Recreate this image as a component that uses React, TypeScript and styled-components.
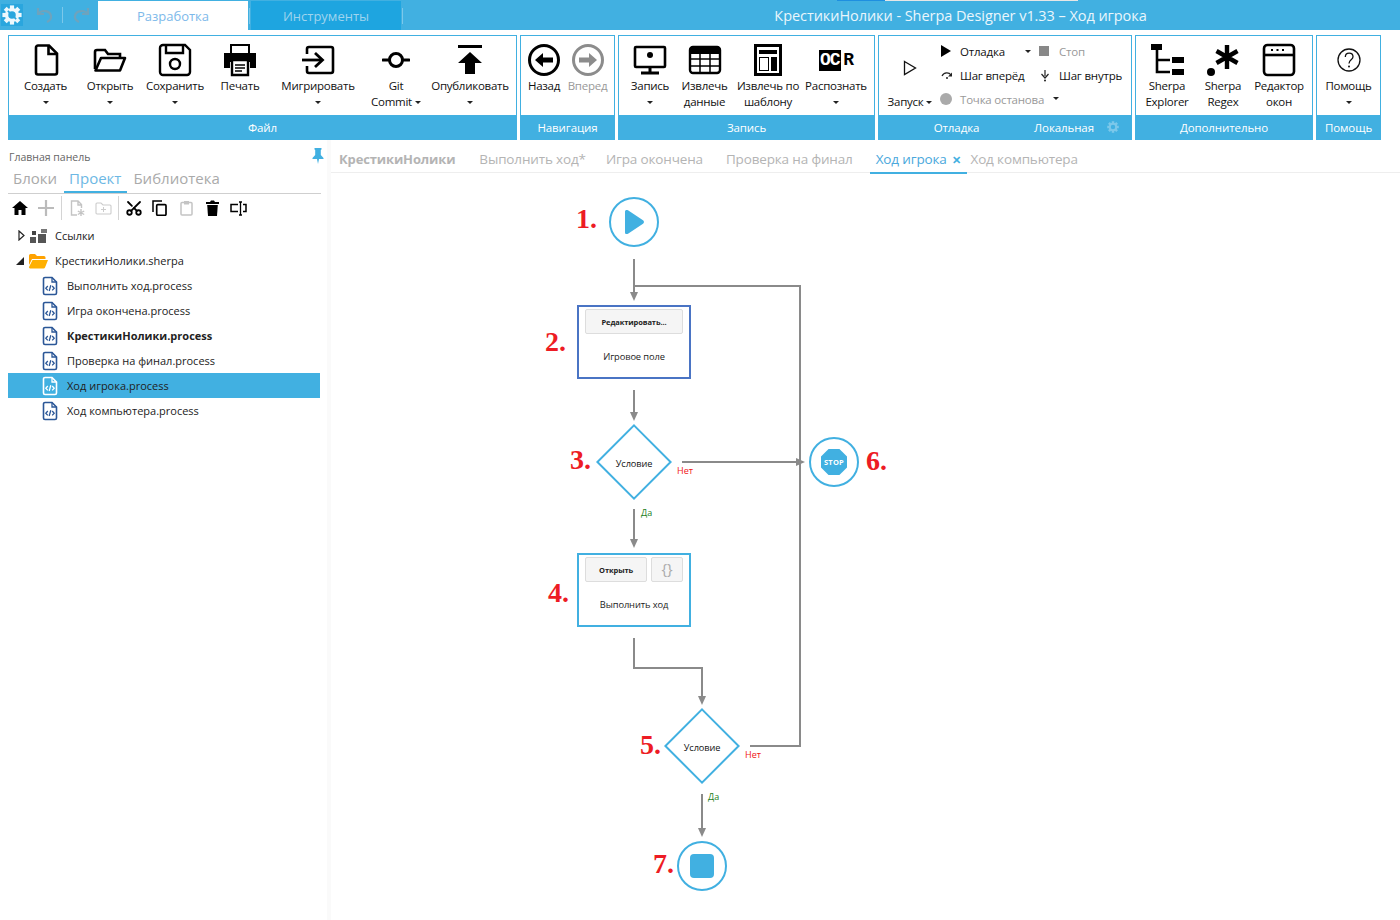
import styled, { createGlobalStyle } from 'styled-components';
import { Scissors } from 'lucide-react';
import type { ReactNode } from 'react';

const BLUE = '#41b0e1';
const GREY = '#8a8a8a';
const ORIGIN_X = 331;
const ORIGIN_Y = 173;

const GlobalStyle = createGlobalStyle`
    html, body {
        margin: 0;
        padding: 0;
        height: 100%;
        overflow: hidden;
        background: #fff;
        font-family: "Open Sans", "Noto Sans", sans-serif;
    }
`

const Page = styled.div`
    width: 1400px;
    height: 920px;
    display: flex;
    flex-direction: column;
    position: relative;
    overflow: hidden;
`

/* title bar */
const TitleBar = styled.header`
    height: 30px;
    background: ${BLUE};
    display: flex;
    align-items: flex-end;
    position: relative;
    flex: none;
`

const QuickBar = styled.div`
    width: 98px;
    height: 30px;
    display: flex;
    align-items: center;
    padding-left: 1px;
    box-sizing: border-box;
`

const GearBox = styled.div`
    width: 22px;
    height: 22px;
    background: #2aa6de;
    display: flex;
    align-items: center;
    justify-content: center;
    margin-right: 13px;
`

const QuickIcon = styled.div`
    width: 18px;
    height: 18px;
    margin-right: 8px;
    display: flex;
    align-items: center;
`

const QuickDivider = styled.div`
    width: 1px;
    height: 16px;
    background: #7cc8ea;
    margin-right: 9px;
`

const TopTab = styled.div<{ $active?: boolean }>`
    width: 150px;
    height: 29px;
    display: flex;
    align-items: center;
    justify-content: center;
    font-size: 13px;
    background: ${p => (p.$active ? '#fff' : '#1ea5e0')};
    color: ${p => (p.$active ? '#7db9ea' : '#9fd4ee')};
`

const TopTabDivider = styled.div`
    width: 1px;
    height: 16px;
    background: #7cc8ea;
    margin: 0 1px 6px 1px;
`

const WindowTitle = styled.div`
    position: absolute;
    left: 521px;
    right: 0;
    top: 0;
    height: 30px;
    line-height: 31px;
    text-align: center;
    color: #eaf6fc;
    font-size: 14.5px;
    letter-spacing: -0.06px;
`

const TopStrip = styled.div`
    position: absolute;
    left: 837px;
    top: 0;
    width: 241px;
    height: 1px;
    background: linear-gradient(90deg, #1e8fe0 0 48px, #e6e6e6 48px);
`

/* ribbon */
const Ribbon = styled.div`
    display: flex;
    gap: 3px;
    padding: 5px 0 0 8px;
    flex: none;
`

const Group = styled.section<{ $width: number }>`
    width: ${p => p.$width}px;
    height: 105px;
    box-sizing: border-box;
    border: 1px solid ${BLUE};
    display: flex;
    flex-direction: column;
`

const GroupBody = styled.div`
    height: 79px;
    display: flex;
    justify-content: flex-start;
    flex: none;
`

const GroupFooter = styled.div`
    flex: 1;
    background: ${BLUE};
    color: #fff;
    font-size: 11.5px;
    font-weight: 500;
    letter-spacing: -0.1px;
    display: flex;
    align-items: center;
    justify-content: center;
`

const DebugFooter = styled(GroupFooter)`
    justify-content: flex-start;
`

const DebugFooterMain = styled.span`
    width: 155px;
    text-align: center;
`

const DebugFooterSide = styled.span`
    width: 60px;
    text-align: center;
    margin-right: 13px;
`

const RibbonButton = styled.div<{ $width: number; $disabled?: boolean }>`
    width: ${p => p.$width}px;
    flex: none;
    display: flex;
    flex-direction: column;
    align-items: center;
    color: ${p => (p.$disabled ? '#999' : '#111')};
`

const IconSlot = styled.div<{ $height?: number }>`
    height: ${p => p.$height ?? 42}px;
    width: 100%;
    display: flex;
    align-items: center;
    justify-content: center;
    padding-top: 6px;
    box-sizing: border-box;
`

const ButtonLabel = styled.div`
    font-size: 11.5px;
    line-height: 16px;
    letter-spacing: -0.25px;
    text-align: center;
    white-space: nowrap;
`

const Caret = styled.i<{ $inline?: boolean; $raised?: boolean }>`
    display: inline-block;
    width: 0;
    height: 0;
    border-left: 3px solid transparent;
    border-right: 3px solid transparent;
    border-top: 3px solid #222;
    vertical-align: middle;
    margin-left: ${p => (p.$raised ? '9px' : p.$inline ? '3px' : '0')};
    margin-bottom: ${p => (p.$raised ? '4px' : '0')};
`

const CaretLine = styled.div`
    height: 16px;
    display: flex;
    align-items: center;
    justify-content: center;
`

const OcrMark = styled.div`
    display: flex;
    align-items: center;
    height: 21px;
    font-family: "Liberation Mono", monospace;
    font-weight: 700;
    font-size: 18px;
    letter-spacing: -1.2px;
`

const OcrDark = styled.span`
    background: #000;
    color: #fff;
    height: 21px;
    line-height: 21px;
    padding: 0 2px 0 1px;
`

const OcrPlain = styled.span`
    color: #000;
    margin-left: 2px;
`

const DebugGrid = styled.div`
    display: grid;
    grid-template-columns: 20px 65px 14px 20px 62px;
    grid-auto-rows: 24px;
    align-items: center;
    padding-top: 3px;
    margin-left: -1px;
    font-size: 11.5px;
    letter-spacing: -0.2px;
    color: #111;
`

const DebugIcon = styled.div`
    display: flex;
    align-items: center;
    justify-content: flex-start;
`

const DebugText = styled.div<{ $disabled?: boolean; $span?: number }>`
    color: ${p => (p.$disabled ? '#999' : '#111')};
    white-space: nowrap;
    grid-column: ${p => (p.$span ? `span ${p.$span}` : 'auto')};
`

const Square = styled.div`
    width: 10px;
    height: 10px;
    background: #888;
`

const Dot = styled.div`
    width: 12px;
    height: 12px;
    border-radius: 50%;
    background: #aaa;
`

/* main */
const Main = styled.div`
    flex: 1;
    display: flex;
    min-height: 0;
`

const Sidebar = styled.aside`
    width: 313px;
    margin-left: 8px;
    padding-top: 9px;
    flex: none;
    position: relative;
`

const PanelTitle = styled.div`
    font-size: 10.5px;
    line-height: 16px;
    color: #666;
    padding-left: 1px;
`

const PinIcon = styled.div`
    position: absolute;
    right: -3px;
    top: 7px;
`

const SideTabs = styled.div`
    display: flex;
    gap: 1px;
    height: 25px;
    margin-top: 3px;
    border-bottom: 1px solid #cfcfcf;
    box-sizing: content-box;
`

const SideTab = styled.div<{ $active?: boolean }>`
    font-size: 15px;
    line-height: 21px;
    padding: 0 6px 0 5px;
    height: 25px;
    color: ${p => (p.$active ? '#6db8e4' : '#aaa')};
    border-bottom: ${p => (p.$active ? `2px solid ${BLUE}` : 'none')};
    box-sizing: border-box;
`

const Toolbar = styled.div`
    display: flex;
    align-items: center;
    height: 28px;
    padding-left: 4px;
`

const ToolIcon = styled.div<{ $width?: number }>`
    width: ${p => p.$width ?? 27}px;
    display: flex;
    align-items: center;
    justify-content: flex-start;
    flex: none;
`

const ToolDivider = styled.div<{ $gap?: number }>`
    width: 1px;
    height: 24px;
    background: #d4d4d4;
    margin-right: ${p => p.$gap ?? 8}px;
    flex: none;
`

const Tree = styled.div`
    margin-top: 1px;
    width: 312px;
`

const TreeRow = styled.div<{ $selected?: boolean; $indent: number; $bold?: boolean }>`
    height: 25px;
    display: flex;
    align-items: center;
    padding-left: ${p => p.$indent}px;
    background: ${p => (p.$selected ? BLUE : 'transparent')};
    font-size: 11px;
    color: #222;
    font-weight: ${p => (p.$bold ? 700 : 400)};
`

const Expander = styled.div<{ $width: number }>`
    width: ${p => p.$width}px;
    flex: none;
    display: flex;
    justify-content: flex-start;
`

const TreeLabel = styled.span`
    white-space: nowrap;
`

const FileSlot = styled.div`
    width: 25px;
    flex: none;
    display: flex;
`

const RootSlot = styled.div<{ $width: number }>`
    width: ${p => p.$width}px;
    flex: none;
    display: flex;
`

const Gutter = styled.div`
    width: 10px;
    box-sizing: border-box;
    border-right: 4px solid #fafafa;
    flex: none;
`

const Editor = styled.main`
    flex: 1;
    display: flex;
    flex-direction: column;
    min-width: 0;
    padding-top: 9px;
`

const DocTabs = styled.div`
    height: 23px;
    display: flex;
    border-bottom: 1px solid #eee;
    padding-left: 2px;
    flex: none;
    box-sizing: content-box;
`

const DocTab = styled.div<{ $active?: boolean; $bold?: boolean; $left: number }>`
    margin-left: ${p => p.$left}px;
    height: 20px;
    padding: 0 6px 3px;
    display: flex;
    align-items: center;
    gap: 5px;
    font-size: ${p => (p.$bold ? '13px' : '13.5px')};
    letter-spacing: -0.15px;
    white-space: nowrap;
    font-weight: ${p => (p.$bold ? 700 : 400)};
    color: ${p => (p.$active ? '#4aa8dc' : '#b4b4b4')};
    border-bottom: ${p => (p.$active ? `2px solid ${BLUE}` : 'none')};
    box-sizing: content-box;
`

const CloseMark = styled.span`
    color: ${BLUE};
    font-size: 11px;
    font-weight: 700;
`

const Canvas = styled.div`
    flex: 1;
    position: relative;
`

const Wires = styled.svg`
    position: absolute;
    left: 0;
    top: 0;
`

const Circle = styled.div<{ $x: number; $y: number }>`
    position: absolute;
    left: ${p => p.$x - ORIGIN_X - 25}px;
    top: ${p => p.$y - ORIGIN_Y - 25}px;
    width: 50px;
    height: 50px;
    box-sizing: border-box;
    border: 2px solid ${BLUE};
    border-radius: 50%;
    display: flex;
    align-items: center;
    justify-content: center;
    background: #fff;
`

const EndSquare = styled.div`
    width: 24px;
    height: 24px;
    border-radius: 4px;
    background: ${BLUE};
`

const StopSign = styled.div`
    width: 26px;
    height: 26px;
    background: ${BLUE};
    clip-path: polygon(29% 0, 71% 0, 100% 29%, 100% 71%, 71% 100%, 29% 100%, 0 71%, 0 29%);
    display: flex;
    align-items: center;
    justify-content: center;
    color: #fff;
    font-size: 7.5px;
    font-weight: 700;
    letter-spacing: 0.2px;
`

const Block = styled.div<{ $x: number; $y: number; $color: string }>`
    position: absolute;
    left: ${p => p.$x - ORIGIN_X}px;
    top: ${p => p.$y - ORIGIN_Y}px;
    width: 114px;
    height: 74px;
    box-sizing: border-box;
    border: 2px solid ${p => p.$color};
    background: #fff;
    padding: 2px 6px 0;
    display: flex;
    flex-direction: column;
`

const BlockButtons = styled.div`
    display: flex;
    gap: 4px;
`

const BlockButton = styled.div<{ $width: number }>`
    width: ${p => p.$width}px;
    height: 25px;
    box-sizing: border-box;
    background: #f5f5f5;
    border: 1px solid #ddd;
    border-radius: 2px;
    display: flex;
    align-items: center;
    justify-content: center;
    font-size: 7.5px;
    font-weight: 700;
    color: #222;
    letter-spacing: -0.1px;
`

const BraceButton = styled(BlockButton)`
    font-size: 15px;
    font-weight: 400;
    color: #aaa;
    padding-bottom: 3px;
`

const BlockCaption = styled.div`
    flex: 1;
    display: flex;
    align-items: center;
    justify-content: center;
    font-size: 9.3px;
    letter-spacing: -0.1px;
    color: #222;
    padding-top: 2px;
`

const Diamond = styled.div<{ $x: number; $y: number }>`
    position: absolute;
    left: ${p => p.$x - ORIGIN_X - 38}px;
    top: ${p => p.$y - ORIGIN_Y - 38}px;
    width: 76px;
    height: 76px;
    display: flex;
    align-items: center;
    justify-content: center;
    font-size: 9.2px;
    letter-spacing: -0.1px;
    color: #111;
    padding-top: 2px;
    box-sizing: border-box;
`

const DiamondShape = styled.svg`
    position: absolute;
    left: 0;
    top: 0;
`

const DiamondLabel = styled.span`
    position: relative;
`

const Branch = styled.span<{ $x: number; $y: number; $yes?: boolean }>`
    position: absolute;
    left: ${p => p.$x - ORIGIN_X}px;
    top: ${p => p.$y - ORIGIN_Y}px;
    font-size: 9px;
    line-height: 12px;
    color: ${p => (p.$yes ? '#1c7f1c' : '#f01414')};
`

const StepNumber = styled.span<{ $x: number; $y: number }>`
    position: absolute;
    left: ${p => p.$x - ORIGIN_X}px;
    top: ${p => p.$y - ORIGIN_Y - 16}px;
    font-family: "Liberation Serif", serif;
    font-weight: 700;
    font-size: 28px;
    line-height: 32px;
    color: #ed1c24;
`

const steps = [
    { n: '1.', x: 576, y: 219 },
    { n: '2.', x: 545, y: 342 },
    { n: '3.', x: 570, y: 460 },
    { n: '4.', x: 548, y: 593 },
    { n: '5.', x: 640, y: 745 },
    { n: '6.', x: 866, y: 461 },
    { n: '7.', x: 653, y: 864 },
];

const wirePaths = [
    'M634 259V293',
    'M634 286H800V746H750',
    'M634 390V412',
    'M682 462H798',
    'M634 509V540',
    'M634 638V668H702V697',
    'M702 794V829',
];

const arrowHeads = [
    [634, 301, 'down'], [634, 421, 'down'], [805, 462, 'right'],
    [634, 548, 'down'], [702, 705, 'down'], [702, 837, 'down'],
] as const;

const files = [
    { name: 'Выполнить ход.process' },
    { name: 'Игра окончена.process' },
    { name: 'КрестикиНолики.process', bold: true },
    { name: 'Проверка на финал.process' },
    { name: 'Ход игрока.process', selected: true },
    { name: 'Ход компьютера.process' },
];

function Ico(props: { w: number; h: number; children: ReactNode }) {
    return <svg width={props.w} height={props.h} viewBox={`0 0 ${props.w} ${props.h}`} fill="none">{props.children}</svg>;
}

function GearGlyph(props: { size: number; color: string; slash?: string }) {
    const teeth = [0, 45, 90, 135, 180, 225, 270, 315];
    return (
        <svg width={props.size} height={props.size} viewBox="0 0 24 24" fill="none">
            {teeth.map(a => (
                <rect key={a} x="9.5" y="0.5" width="5" height="6" fill={props.color} transform={`rotate(${a} 12 12)`} />
            ))}
            <circle cx="12" cy="12" r="6.5" stroke={props.color} strokeWidth="4" />
            {props.slash && <path d="M7 7L17 17" stroke={props.slash} strokeWidth="2" />}
        </svg>
    );
}

function FileIcon(props: { light?: boolean }) {
    const c = props.light ? '#fff' : '#2b5797';
    return (
        <svg width="16" height="20" viewBox="0 0 16 20" fill="none">
            <path d="M1.5 3A1.5 1.5 0 0 1 3 1.5H10L14.5 6V17A1.5 1.5 0 0 1 13 18.5H3A1.5 1.5 0 0 1 1.5 17Z" stroke={c} strokeWidth="1.6" />
            <path d="M10 1.5V6H14.5" stroke={c} strokeWidth="1.3" />
            <path d="M5.8 10L3.8 12.2L5.8 14.4M10.2 10L12.2 12.2L10.2 14.4M8.8 9.3L7.2 15" stroke={c} strokeWidth="1.3" />
        </svg>
    );
}

function CaretLineEl() {
    return <CaretLine><Caret /></CaretLine>;
}

function FileGroup() {
    return (
        <Group $width={509}>
            <GroupBody>
                <RibbonButton $width={73}>
                    <IconSlot>
                        <Ico w={26} h={34}>
                            <path d="M3 4.5A2 2 0 0 1 5 2.5H16L24 10.5V29.5A2 2 0 0 1 22 31.5H5A2 2 0 0 1 3 29.5Z" stroke="#000" strokeWidth="2.6" />
                            <path d="M15.5 2.5V11H24" stroke="#000" strokeWidth="2.6" />
                        </Ico>
                    </IconSlot>
                    <ButtonLabel>Создать</ButtonLabel>
                    <CaretLineEl />
                </RibbonButton>
                <RibbonButton $width={56}>
                    <IconSlot>
                        <Ico w={34} h={26}>
                            <path d="M2 22V5A2 2 0 0 1 4 3H12L15 7H27V11" stroke="#000" strokeWidth="2.6" />
                            <path d="M2.5 23.5L8 11H32L27 23.5Z" stroke="#000" strokeWidth="2.6" strokeLinejoin="round" />
                        </Ico>
                    </IconSlot>
                    <ButtonLabel>Открыть</ButtonLabel>
                    <CaretLineEl />
                </RibbonButton>
                <RibbonButton $width={74}>
                    <IconSlot>
                        <Ico w={34} h={34}>
                            <path d="M2 5A3 3 0 0 1 5 2H27L32 7V29A3 3 0 0 1 29 32H5A3 3 0 0 1 2 29Z" stroke="#000" strokeWidth="2.4" />
                            <path d="M8 2V10H25V2" stroke="#000" strokeWidth="2.4" />
                            <circle cx="17" cy="21" r="5" stroke="#000" strokeWidth="2.4" />
                        </Ico>
                    </IconSlot>
                    <ButtonLabel>Сохранить</ButtonLabel>
                    <CaretLineEl />
                </RibbonButton>
                <RibbonButton $width={56}>
                    <IconSlot>
                        <Ico w={34} h={34}>
                            <path d="M8 10V2H26V10" stroke="#000" strokeWidth="2" />
                            <path d="M1 10H33V25H27V19H7V25H1Z" fill="#000" />
                            <path d="M9 17H25V32H9Z" fill="#fff" stroke="#000" strokeWidth="2.4" />
                            <path d="M12 22H22M12 25H22M12 28H19" stroke="#000" strokeWidth="1.4" />
                        </Ico>
                    </IconSlot>
                    <ButtonLabel>Печать</ButtonLabel>
                </RibbonButton>
                <RibbonButton $width={100}>
                    <IconSlot>
                        <Ico w={34} h={30}>
                            <path d="M6 9V4A2 2 0 0 1 8 2H30A2 2 0 0 1 32 4V26A2 2 0 0 1 30 28H8A2 2 0 0 1 6 26V21" stroke="#000" strokeWidth="2.6" />
                            <path d="M1 15H20" stroke="#000" strokeWidth="2.8" />
                            <path d="M14 8L21.5 15L14 22" stroke="#000" strokeWidth="2.8" />
                        </Ico>
                    </IconSlot>
                    <ButtonLabel>Мигрировать</ButtonLabel>
                    <CaretLineEl />
                </RibbonButton>
                <RibbonButton $width={56}>
                    <IconSlot>
                        <Ico w={28} h={18}>
                            <path d="M1 9H7M21 9H27" stroke="#000" strokeWidth="3" strokeLinecap="round" />
                            <circle cx="14" cy="9" r="6.5" stroke="#000" strokeWidth="3" />
                        </Ico>
                    </IconSlot>
                    <ButtonLabel>Git<br />Commit<Caret $inline /></ButtonLabel>
                </RibbonButton>
                <RibbonButton $width={92}>
                    <IconSlot>
                        <Ico w={24} h={30}>
                            <path d="M0 1.5H24" stroke="#000" strokeWidth="3" />
                            <path d="M12 7L24 18H17V29H7V18H0Z" fill="#000" />
                        </Ico>
                    </IconSlot>
                    <ButtonLabel>Опубликовать</ButtonLabel>
                    <CaretLineEl />
                </RibbonButton>
            </GroupBody>
            <GroupFooter>Файл</GroupFooter>
        </Group>
    );
}

function NavGroup() {
    return (
        <Group $width={95}>
            <GroupBody>
                <RibbonButton $width={46}>
                    <IconSlot>
                        <Ico w={34} h={34}>
                            <circle cx="17" cy="17" r="14.5" stroke="#000" strokeWidth="3" />
                            <path d="M8 17L16 10V14.5H26V19.5H16V24Z" fill="#000" />
                        </Ico>
                    </IconSlot>
                    <ButtonLabel>Назад</ButtonLabel>
                </RibbonButton>
                <RibbonButton $width={41} $disabled>
                    <IconSlot>
                        <Ico w={34} h={34}>
                            <circle cx="17" cy="17" r="14.5" stroke="#8c8c8c" strokeWidth="3" />
                            <path d="M26 17L18 10V14.5H8V19.5H18V24Z" fill="#8c8c8c" />
                        </Ico>
                    </IconSlot>
                    <ButtonLabel>Вперед</ButtonLabel>
                </RibbonButton>
            </GroupBody>
            <GroupFooter>Навигация</GroupFooter>
        </Group>
    );
}

function RecordGroup() {
    return (
        <Group $width={257}>
            <GroupBody>
                <RibbonButton $width={62}>
                    <IconSlot>
                        <Ico w={34} h={30}>
                            <rect x="2" y="2" width="30" height="20" stroke="#000" strokeWidth="2.6" rx="1" />
                            <circle cx="17" cy="10" r="3" fill="#000" />
                            <path d="M17 22V27M8 28H26" stroke="#000" strokeWidth="3" />
                        </Ico>
                    </IconSlot>
                    <ButtonLabel>Запись</ButtonLabel>
                    <CaretLineEl />
                </RibbonButton>
                <RibbonButton $width={47}>
                    <IconSlot>
                        <Ico w={34} h={30}>
                            <rect x="2" y="2" width="30" height="26" rx="3" stroke="#000" strokeWidth="2.4" />
                            <path d="M2 6H32" stroke="#000" strokeWidth="6" />
                            <path d="M2 14H32M2 21H32M12 8V28M22 8V28" stroke="#000" strokeWidth="1.5" />
                        </Ico>
                    </IconSlot>
                    <ButtonLabel>Извлечь<br />данные</ButtonLabel>
                </RibbonButton>
                <RibbonButton $width={80}>
                    <IconSlot>
                        <Ico w={28} h={32}>
                            <rect x="1.5" y="1.5" width="25" height="29" stroke="#000" strokeWidth="3" />
                            <path d="M5 6H23V10H5Z" fill="#000" />
                            <rect x="5.5" y="13.5" width="9" height="13" stroke="#000" strokeWidth="1" />
                            <path d="M17 13H23V27H17Z" fill="#000" />
                        </Ico>
                    </IconSlot>
                    <ButtonLabel>Извлечь по<br />шаблону</ButtonLabel>
                </RibbonButton>
                <RibbonButton $width={56}>
                    <IconSlot>
                        <OcrMark><OcrDark>OC</OcrDark><OcrPlain>R</OcrPlain></OcrMark>
                    </IconSlot>
                    <ButtonLabel>Распознать</ButtonLabel>
                    <CaretLineEl />
                </RibbonButton>
            </GroupBody>
            <GroupFooter>Запись</GroupFooter>
        </Group>
    );
}

function DebugGroup() {
    return (
        <Group $width={254}>
            <GroupBody>
                <RibbonButton $width={62}>
                    <IconSlot $height={58}>
                        <Ico w={14} h={16}>
                            <path d="M1.5 1.5L12.5 8L1.5 14.5Z" stroke="#111" strokeWidth="1.3" />
                        </Ico>
                    </IconSlot>
                    <ButtonLabel>Запуск<Caret $inline /></ButtonLabel>
                </RibbonButton>
                <DebugGrid>
                    <DebugIcon>
                        <Ico w={12} h={14}><path d="M1 1L11 7L1 13Z" fill="#000" /></Ico>
                    </DebugIcon>
                    <DebugText>Отладка</DebugText>
                    <Caret />
                    <DebugIcon><Square /></DebugIcon>
                    <DebugText $disabled>Стоп</DebugText>
                    <DebugIcon>
                        <Ico w={14} h={10}>
                            <path d="M2 6C4 2 9 2 11 5" stroke="#222" strokeWidth="1.2" />
                            <path d="M12 2.5V6.5H8" fill="#222" />
                            <circle cx="7" cy="8" r="1" fill="#222" />
                        </Ico>
                    </DebugIcon>
                    <DebugText>Шаг вперёд</DebugText>
                    <span />
                    <DebugIcon>
                        <Ico w={12} h={13}>
                            <path d="M6 1V7" stroke="#222" strokeWidth="1.2" />
                            <path d="M2.5 5L6 9L9.5 5" stroke="#222" strokeWidth="1.2" />
                            <circle cx="6" cy="11.5" r="1" fill="#222" />
                        </Ico>
                    </DebugIcon>
                    <DebugText>Шаг внутрь</DebugText>
                    <DebugIcon><Dot /></DebugIcon>
                    <DebugText $disabled $span={2}>Точка останова<Caret $raised /></DebugText>
                </DebugGrid>
            </GroupBody>
            <DebugFooter>
                <DebugFooterMain>Отладка</DebugFooterMain>
                <DebugFooterSide>Локальная</DebugFooterSide>
                <GearGlyph size={12} color="#7cc8ea" />
            </DebugFooter>
        </Group>
    );
}

function ExtraGroup() {
    return (
        <Group $width={178}>
            <GroupBody>
                <RibbonButton $width={62}>
                    <IconSlot>
                        <Ico w={34} h={34}>
                            <path d="M1 1H12V7H1ZM22 14H34V20H22ZM22 26H34V32H22Z" fill="#000" />
                            <path d="M7 7V29H20M7 17H20" stroke="#000" strokeWidth="2.6" />
                        </Ico>
                    </IconSlot>
                    <ButtonLabel>Sherpa<br />Explorer</ButtonLabel>
                </RibbonButton>
                <RibbonButton $width={50}>
                    <IconSlot>
                        <Ico w={34} h={34}>
                            <circle cx="5" cy="29" r="4" fill="#000" />
                            <path d="M21 2V26M10.5 8L31.5 20M31.5 8L10.5 20" stroke="#000" strokeWidth="4.4" />
                        </Ico>
                    </IconSlot>
                    <ButtonLabel>Sherpa<br />Regex</ButtonLabel>
                </RibbonButton>
                <RibbonButton $width={62}>
                    <IconSlot>
                        <Ico w={34} h={34}>
                            <rect x="2" y="2" width="30" height="30" rx="3.5" stroke="#000" strokeWidth="2.6" />
                            <path d="M2 12H32" stroke="#000" strokeWidth="2.6" />
                            <path d="M9 7H11M14.5 7H16.5M20 7H22" stroke="#000" strokeWidth="2" />
                        </Ico>
                    </IconSlot>
                    <ButtonLabel>Редактор<br />окон</ButtonLabel>
                </RibbonButton>
            </GroupBody>
            <GroupFooter>Дополнительно</GroupFooter>
        </Group>
    );
}

function HelpGroup() {
    return (
        <Group $width={65}>
            <GroupBody>
                <RibbonButton $width={63}>
                    <IconSlot>
                        <svg width="24" height="24" viewBox="0 0 24 24" fill="none">
                            <circle cx="12" cy="12" r="11" stroke="#111" strokeWidth="1.3" />
                            <path d="M8.3 9C8.5 3.8 16 4.2 16 8.8C16 11.8 12 12 12 15.5" stroke="#111" strokeWidth="1.3" />
                            <circle cx="12" cy="18.5" r="1" fill="#111" />
                        </svg>
                    </IconSlot>
                    <ButtonLabel>Помощь</ButtonLabel>
                    <CaretLineEl />
                </RibbonButton>
            </GroupBody>
            <GroupFooter>Помощь</GroupFooter>
        </Group>
    );
}

function ProjectPanel() {
    return (
        <Sidebar>
            <PanelTitle>Главная панель</PanelTitle>
            <PinIcon>
                <svg width="12" height="16" viewBox="0 0 12 16" fill={BLUE}>
                    <path d="M2.5 0H9.5V1.5L8.8 2V7L11.5 10V11H0.5V10L3.2 7V2L2.5 1.5Z" />
                    <path d="M5 11H7L6 16Z" />
                </svg>
            </PinIcon>
            <SideTabs>
                <SideTab>Блоки</SideTab>
                <SideTab $active>Проект</SideTab>
                <SideTab>Библиотека</SideTab>
            </SideTabs>
            <Toolbar>
                <ToolIcon $width={26}>
                    <svg width="16" height="14" viewBox="0 0 16 14" fill="#000">
                        <path d="M8 0L16 7H13.5V14H9.5V9H6.5V14H2.5V7H0Z" />
                    </svg>
                </ToolIcon>
                <ToolIcon $width={23}>
                    <svg width="16" height="16" viewBox="0 0 16 16"><path d="M8 0V16M0 8H16" stroke="#bbb" strokeWidth="2.2" /></svg>
                </ToolIcon>
                <ToolDivider />
                <ToolIcon $width={25}>
                    <svg width="15" height="17" viewBox="0 0 15 17" fill="none">
                        <path d="M7 15H1.5V1H8L11.5 4.5V8M8 1V5H11.5" stroke="#c4c4c4" strokeWidth="1.4" />
                        <path d="M11 9V16M7.8 11L14.2 14.5M14.2 11L7.8 14.5" stroke="#c4c4c4" strokeWidth="1.4" />
                    </svg>
                </ToolIcon>
                <ToolIcon $width={23}>
                    <svg width="17" height="14" viewBox="0 0 17 14" fill="none">
                        <path d="M1 3A1 1 0 0 1 2 2H6L8 4H15A1 1 0 0 1 16 5V12A1 1 0 0 1 15 13H2A1 1 0 0 1 1 12Z" stroke="#ccc" strokeWidth="1.1" />
                        <path d="M6 8.5H11M8.5 6V11" stroke="#ccc" strokeWidth="1" />
                    </svg>
                </ToolIcon>
                <ToolDivider $gap={6} />
                <ToolIcon>
                    <Scissors size={18} color="#000" strokeWidth={2.4} style={{ transform: 'rotate(90deg) scaleX(-1)' }} />
                </ToolIcon>
                <ToolIcon $width={28}>
                    <svg width="15" height="16" viewBox="0 0 15 16" fill="none">
                        <path d="M1 12V1H10" stroke="#000" strokeWidth="1.5" />
                        <rect x="4.7" y="4.7" width="9.3" height="10.6" rx="1" stroke="#000" strokeWidth="1.7" />
                    </svg>
                </ToolIcon>
                <ToolIcon $width={26}>
                    <svg width="13" height="16" viewBox="0 0 13 16" fill="none">
                        <rect x="1" y="2.5" width="11" height="12.5" rx="1" stroke="#c4c4c4" strokeWidth="1.5" />
                        <path d="M4 1H9V4.5H4Z" fill="#c4c4c4" />
                    </svg>
                </ToolIcon>
                <ToolIcon $width={24}>
                    <svg width="13" height="16" viewBox="0 0 13 16" fill="#000">
                        <path d="M0 2H4L5 0.5H8L9 2H13V4H0Z" />
                        <path d="M1.2 5H11.8L11 16H2Z" />
                    </svg>
                </ToolIcon>
                <ToolIcon>
                    <svg width="17" height="15" viewBox="0 0 17 15" fill="none">
                        <path d="M8 3.5H1V10.5H8M13 3.5H16V10.5H13" stroke="#000" strokeWidth="1.5" />
                        <path d="M9 1H10.5V14H9M12 1H10.5V14H12" stroke="#000" strokeWidth="1.3" />
                    </svg>
                </ToolIcon>
            </Toolbar>
            <Tree>
                <TreeRow $indent={10}>
                    <Expander $width={12}>
                        <svg width="7" height="11" viewBox="0 0 7 11" fill="none"><path d="M1 1L6 5.5L1 10Z" stroke="#222" strokeWidth="1.2" /></svg>
                    </Expander>
                    <RootSlot $width={25}>
                        <svg width="17" height="14" viewBox="0 0 17 14" fill="#555">
                            <rect x="0" y="8" width="6" height="6" />
                            <rect x="2" y="2" width="4" height="4" fill="#444" />
                            <rect x="8" y="5" width="8" height="9" />
                            <rect x="11" y="0" width="6" height="4" fill="#777" />
                        </svg>
                    </RootSlot>
                    <TreeLabel>Ссылки</TreeLabel>
                </TreeRow>
                <TreeRow $indent={8}>
                    <Expander $width={12}>
                        <svg width="8" height="8" viewBox="0 0 8 8" fill="#222"><path d="M8 0V8H0Z" /></svg>
                    </Expander>
                    <RootSlot $width={27}>
                        <svg width="20" height="16" viewBox="0 0 20 16" fill="none">
                            <path d="M1 2.5A1.5 1.5 0 0 1 2.5 1H7L9 3H16A1.5 1.5 0 0 1 17.5 4.5V6H4L1 12Z" fill="#ffa200" />
                            <path d="M4.5 7H20L17 14.5A1.5 1.5 0 0 1 15.6 15.5H2A1.5 1.5 0 0 1 1 14Z" fill="#ffb000" />
                        </svg>
                    </RootSlot>
                    <TreeLabel>КрестикиНолики.sherpa</TreeLabel>
                </TreeRow>
                {files.map(f => (
                    <TreeRow key={f.name} $indent={34} $selected={f.selected} $bold={f.bold}>
                        <FileSlot><FileIcon light={f.selected} /></FileSlot>
                        <TreeLabel>{f.name}</TreeLabel>
                    </TreeRow>
                ))}
            </Tree>
        </Sidebar>
    );
}

function Diagram() {
    return (
        <Canvas>
            <Wires width={1069} height={747} viewBox={`${ORIGIN_X} ${ORIGIN_Y} 1069 747`} fill="none">
                {wirePaths.map(d => <path key={d} d={d} stroke={GREY} strokeWidth="2" />)}
                {arrowHeads.map(([x, y, dir]) => (
                    <path
                        key={`${x}-${y}`}
                        fill={GREY}
                        d={dir === 'down'
                            ? `M${x} ${y}L${x - 4} ${y - 9}H${x + 4}Z`
                            : `M${x} ${y}L${x - 9} ${y - 4}V${y + 4}Z`}
                    />
                ))}
            </Wires>

            <Circle $x={634} $y={222}>
                <svg width="22" height="26" viewBox="0 0 22 26" fill={BLUE}>
                    <path d="M2 2.5C2 1 3.5 0.5 5 1.3L20 11.2C21.3 12 21.3 14 20 14.8L5 24.7C3.5 25.5 2 25 2 23.5Z" />
                </svg>
            </Circle>

            <Block $x={577} $y={305} $color="#4a74c4">
                <BlockButtons><BlockButton $width={98}>Редактировать...</BlockButton></BlockButtons>
                <BlockCaption>Игровое поле</BlockCaption>
            </Block>

            <Diamond $x={634} $y={462}>
                <DiamondShape width="76" height="76" viewBox="0 0 76 76" fill="#fff">
                    <path d="M38 1.4L74.6 38L38 74.6L1.4 38Z" stroke={BLUE} strokeWidth="2" />
                </DiamondShape>
                <DiamondLabel>Условие</DiamondLabel>
            </Diamond>
            <Branch $x={677} $y={465}>Нет</Branch>

            <Circle $x={834} $y={462}><StopSign>STOP</StopSign></Circle>

            <Branch $x={641} $y={507} $yes>Да</Branch>

            <Block $x={577} $y={553} $color={BLUE}>
                <BlockButtons>
                    <BlockButton $width={62}>Открыть</BlockButton>
                    <BraceButton $width={32}>{'{}'}</BraceButton>
                </BlockButtons>
                <BlockCaption>Выполнить ход</BlockCaption>
            </Block>

            <Diamond $x={702} $y={746}>
                <DiamondShape width="76" height="76" viewBox="0 0 76 76" fill="#fff">
                    <path d="M38 1.4L74.6 38L38 74.6L1.4 38Z" stroke={BLUE} strokeWidth="2" />
                </DiamondShape>
                <DiamondLabel>Условие</DiamondLabel>
            </Diamond>
            <Branch $x={745} $y={749}>Нет</Branch>
            <Branch $x={708} $y={791} $yes>Да</Branch>

            <Circle $x={702} $y={866}><EndSquare /></Circle>

            {steps.map(s => <StepNumber key={s.n} $x={s.x} $y={s.y}>{s.n}</StepNumber>)}
        </Canvas>
    );
}

function App() {
    return (
        <Page>
            <GlobalStyle />
            <TitleBar>
                <QuickBar>
                    <GearBox><GearGlyph size={20} color="#eef8fd" slash="#2aa6de" /></GearBox>
                    <QuickIcon>
                        <svg width="18" height="18" viewBox="0 0 18 18" fill="none">
                            <path d="M2 2V8H8M2.5 8C5 3.5 14 4 15 10C15.5 13 13 15 11 16" stroke="#6ea3bd" strokeWidth="2.2" />
                        </svg>
                    </QuickIcon>
                    <QuickDivider />
                    <QuickIcon>
                        <svg width="18" height="18" viewBox="0 0 18 18" fill="none">
                            <path d="M16 2V8H10M15.5 8C13 3.5 4 4 3 10C2.5 13 5 15 7 16" stroke="#6ea3bd" strokeWidth="2.2" />
                        </svg>
                    </QuickIcon>
                </QuickBar>
                <TopTab $active>Разработка</TopTab>
                <TopTabDivider />
                <TopTab>Инструменты</TopTab>
                <TopTabDivider />
                <WindowTitle>КрестикиНолики - Sherpa Designer v1.33 – Ход игрока</WindowTitle>
                <TopStrip />
            </TitleBar>
            <Ribbon>
                <FileGroup />
                <NavGroup />
                <RecordGroup />
                <DebugGroup />
                <ExtraGroup />
                <HelpGroup />
            </Ribbon>
            <Main>
                <ProjectPanel />
                <Gutter />
                <Editor>
                    <DocTabs>
                        <DocTab $bold $left={0}>КрестикиНолики</DocTab>
                        <DocTab $left={12}>Выполнить ход*</DocTab>
                        <DocTab $left={8}>Игра окончена</DocTab>
                        <DocTab $left={11}>Проверка на финал</DocTab>
                        <DocTab $active $left={11}>Ход игрока<CloseMark>✕</CloseMark></DocTab>
                        <DocTab $left={-2}>Ход компьютера</DocTab>
                    </DocTabs>
                    <Diagram />
                </Editor>
            </Main>
        </Page>
    );
}

export default App;
